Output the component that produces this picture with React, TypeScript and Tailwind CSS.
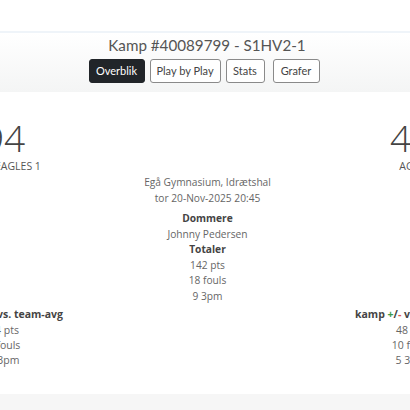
import React from "react";

const body = "font-['Open_Sans','Liberation_Sans',sans-serif]";

interface TeamSide {
  score: string;
  name: string;
  stats: string[];
}

const home: TeamSide = { score: "94", name: "Egå Eagles 1", stats: ["94 pts", "8 fouls", "4 3pm"] };
const away: TeamSide = { score: "48", name: "AGF 1", stats: ["48 pts", "10 fouls", "5 3pm"] };

const tabs = [
  { label: "Overblik", w: "w-[56px]" },
  { label: "Play by Play", w: "w-[71px]" },
  { label: "Stats", w: "w-[39px]" },
  { label: "Grafer", w: "w-[47px] ml-[3px]" },
];

function TeamHead({ team }: { team: TeamSide }) {
  return (
    <div className="flex w-[213px] shrink-0 flex-col items-center">
      <div className="text-[37px] font-light leading-[42px] text-[#444]">{team.score}</div>
      <div className="pl-[5px] text-[10.5px] uppercase leading-[14px] text-[#555]">{team.name}</div>
    </div>
  );
}

function TeamStats({ team }: { team: TeamSide }) {
  return (
    <div className="flex w-[213px] shrink-0 flex-col items-center text-[10.5px] leading-[15px] text-[#666]">
      <div className="pb-[1px] pl-[3px] font-bold text-[#444]">
        kamp <span className="text-[#3a9a4a]">+</span>/<span className="text-[#d9534f]">-</span> vs. team-avg
      </div>
      {team.stats.map((s) => (
        <div key={s}>{s}</div>
      ))}
    </div>
  );
}

export default function App() {
  return (
    <div className={`h-[410px] w-[410px] overflow-hidden bg-white ${body}`}>
      <div className="h-[31px]" />
      <header className="flex h-[61px] flex-col items-center border-t-2 border-[#eff4f9] bg-gradient-to-b from-white to-[#f4f5f5] pt-[1px]">
        <h1 className="pl-[4px] font-['Lato','Liberation_Sans',sans-serif] text-[15.2px] leading-[22px] text-[#555]">
          Kamp #40089799 - S1HV2-1
        </h1>
        <nav className="mt-[3px] flex gap-[5px] pr-[2px] font-['Lato','Liberation_Sans',sans-serif] text-[11px]">
          {tabs.map((t, i) => (
            <button
              key={t.label}
              className={
                i === 0
                  ? `h-[24px] ${t.w} rounded-[3px] border border-[#212529] bg-[#212529] text-white`
                  : `h-[24px] ${t.w} rounded-[3px] border border-[#8a8a8a] bg-white text-[#444]`
              }
            >
              {t.label}
            </button>
          ))}
        </nav>
      </header>
      <div className="flex justify-center">
        <main className="ml-[5px] w-[620px] shrink-0">
          <section className="flex pt-[25px]">
            <TeamHead team={home} />
            <div className="flex flex-1 flex-col items-center pt-[58px] text-[10.2px] leading-[15.5px] text-[#666]">
              <div>Egå Gymnasium, Idrætshal</div>
              <div>tor 20-Nov-2025 20:45</div>
              <div className="mt-[5px] font-bold text-[#444]">Dommere</div>
              <div>Johnny Pedersen</div>
              <div className="font-bold text-[#444]">Totaler</div>
              <div>142 pts</div>
              <div>18 fouls</div>
              <div>9 3pm</div>
            </div>
            <TeamHead team={away} />
          </section>
          <section className="mt-[3px] flex justify-between">
            <TeamStats team={home} />
            <TeamStats team={away} />
          </section>
        </main>
      </div>
      <div className="mt-[26px] h-[40px] bg-[#f6f6f6]" />
    </div>
  );
}
